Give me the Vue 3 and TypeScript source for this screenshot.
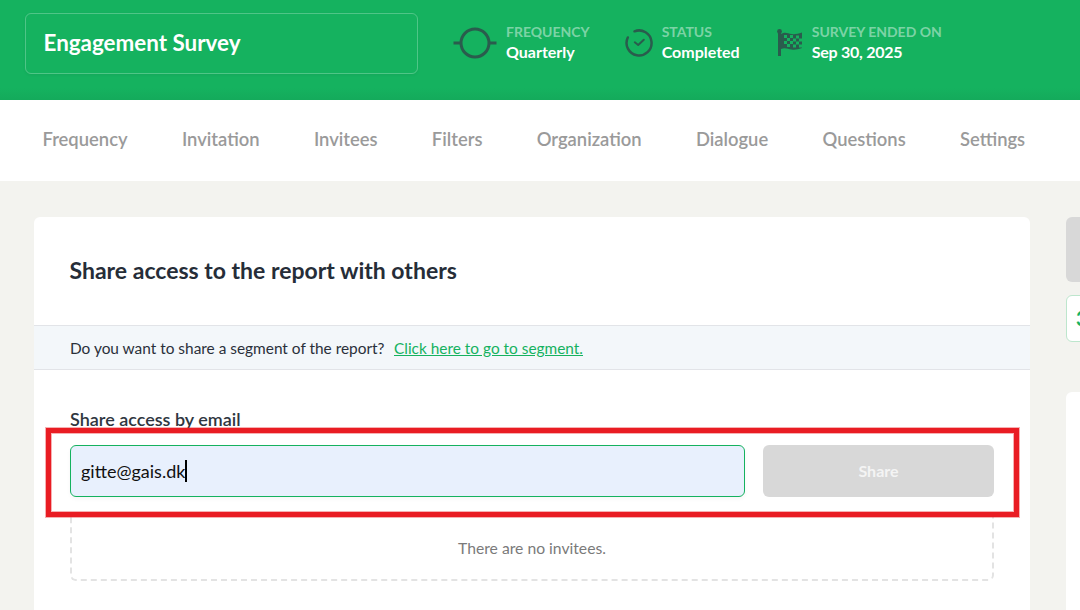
<script setup lang="ts">
const tabs: string[] = ['Frequency', 'Invitation', 'Invitees', 'Filters', 'Organization', 'Dialogue', 'Questions', 'Settings']
const checks: { x: number; y: number }[] = []
for (let r = 0; r < 4; r++) {
  for (let c = 0; c < 6; c++) {
    if ((r + c) % 2 === 0) checks.push({ x: 8 + c * 3, y: 6 + r * 3 + (c > 2 ? 0.5 : 0) })
  }
}
</script>

<template>
  <div class="page">
    <header class="top">
      <div class="title-box">Engagement Survey</div>
      <div class="meta meta-freq">
        <svg class="ic" width="44" height="32" viewBox="0 0 44 32" fill="none" stroke="#2a5c4d" stroke-width="3">
          <circle cx="22" cy="16" r="14" />
          <path d="M0.500 16H8M36 16h7.500" />
        </svg>
        <div class="meta-text"><span class="lbl">FREQUENCY</span><span class="val">Quarterly</span></div>
      </div>
      <div class="meta meta-status">
        <svg class="ic" width="28" height="28" viewBox="0 0 28 28" fill="none" stroke="#2a5c4d" stroke-width="2.500" stroke-linecap="round" stroke-linejoin="round">
          <path d="M9.500 2.300A12.500 12.500 0 1 1 2.800 8.500" />
          <path d="M9.800 13.300l3.400 2.700 5.600-5.300" stroke-width="2" />
        </svg>
        <div class="meta-text"><span class="lbl">STATUS</span><span class="val">Completed</span></div>
      </div>
      <div class="meta meta-end">
        <svg class="ic" width="28" height="28" viewBox="0 0 28 28">
          <circle cx="3.500" cy="2.500" r="2.400" fill="#2a5c4d" />
          <rect x="2" y="3" width="3" height="24" fill="#2a5c4d" />
          <path d="M5 5c4-2.500 7-.5 10.500 0s6 0 10.500-1.500v15.500c-4.500 1.500-7 2-10.500 1.500s-6.500-2.500-10.500-.5z" fill="#2a5c4d" />
          <rect v-for="(k, i) in checks" :key="i" :x="k.x" :y="k.y" width="3" height="3" fill="#15b25f" />
        </svg>
        <div class="meta-text"><span class="lbl">SURVEY ENDED ON</span><span class="val val-date">Sep 30, 2025</span></div>
      </div>
    </header>

    <nav class="tabs">
      <span v-for="t in tabs" :key="t" class="tab">{{ t }}</span>
    </nav>

    <main class="body">
      <section class="card">
        <h1 class="card-title">Share access to the report with others</h1>
        <div class="notice">
          <span>Do you want to share a segment of the report?</span>
          <a class="link">Click here to go to segment.</a>
        </div>
        <div class="form">
          <div class="form-label">Share access by email</div>
          <div class="row">
            <div class="input">gitte@gais.dk<i class="caret"></i></div>
            <button class="share" type="button">Share</button>
          </div>
          <div class="empty">There are no invitees.</div>
        </div>
      </section>
      <aside class="side">
        <div class="side-gray"></div>
        <div class="side-outline">3</div>
        <div class="side-card"></div>
      </aside>
    </main>

    <div class="highlight"></div>
  </div>
</template>

<style>
html, body { margin: 0; overflow: hidden; background: #f3f3ef; }
</style>

<style scoped>
.page {
  position: relative;
  width: 1080px;
  height: 610px;
  overflow: hidden;
  background: #f3f3ef;
  font-family: Lato, "Liberation Sans", sans-serif;
}
.top {
  height: 100px;
  box-sizing: border-box;
  background: linear-gradient(#15b25f 0 88%, #14aa5b 100%);
  padding: 13px 0 0 25px;
  display: flex;
  align-items: flex-start;
}
.title-box {
  width: 393px;
  height: 61px;
  box-sizing: border-box;
  border: 1px solid rgba(255, 255, 255, 0.25);
  border-radius: 6px;
  box-shadow: 0 1px 3px rgba(0, 0, 0, 0.06);
  padding-left: 17.500px;
  line-height: 58px;
  font-size: 22.400px;
  font-weight: 700;
  color: #fff;
}
.meta { display: flex; align-items: center; margin-top: 10px; height: 40px; }
.meta-freq { margin-left: 35px; gap: 9px; }
.meta-status { margin-left: 35px; gap: 9px; }
.meta-end { margin-left: 36px; gap: 8px; }
.ic { flex: none; display: block; }
.meta-text { display: flex; flex-direction: column; padding-bottom: 2px; }
.lbl {
  font-size: 14px;
  line-height: 20px;
  font-weight: 700;
  color: rgba(255, 255, 255, 0.45);
}
.val {
  font-size: 16px;
  line-height: 20px;
  font-weight: 700;
  color: #fff;
}
.val-date { letter-spacing: -0.250px; }
.tabs {
  height: 81px;
  background: #fff;
  box-sizing: border-box;
  padding: 0 0 3px 42.500px;
  display: flex;
  align-items: center;
  gap: 54.300px;
}
.tab {
  font-size: 18.400px;
  font-weight: 600;
  color: #9a9a9a;
}
.body {
  display: flex;
  align-items: flex-start;
  padding: 36px 0 0 34px;
  gap: 36px;
}
.card {
  width: 996px;
  flex: none;
  height: 420px;
  background: #fff;
  border-radius: 6px 6px 0 0;
}
.card-title {
  margin: 0;
  height: 108px;
  box-sizing: border-box;
  padding: 0 35.500px;
  line-height: 106px;
  font-size: 23px;
  font-weight: 700;
  color: #262d38;
}
.notice {
  height: 43px;
  background: #f3f7fa;
  border-top: 1px solid #e2e4e8;
  border-bottom: 1px solid #e2e4e8;
  padding: 0 36px;
  display: flex;
  align-items: center;
  gap: 9.500px;
  font-size: 15.420px;
  color: #2a303a;
}
.link { color: #15b25f; text-decoration: underline; }
.form { padding: 38px 36px 0; }
.form-label {
  font-size: 18px;
  line-height: 22px;
  font-weight: 600;
  color: #2f3640;
}
.row {
  display: flex;
  gap: 18px;
  margin-top: 15px;
}
.input {
  flex: 1;
  height: 52px;
  box-sizing: border-box;
  border: 1px solid #15b25f;
  border-radius: 6px;
  background: #e8f0fd;
  padding-left: 10px;
  font-size: 18px;
  color: #111;
  display: flex;
  align-items: center;
  box-shadow: 0 2px 4px rgba(0, 0, 0, 0.04);
}
.caret {
  display: block;
  width: 2px;
  height: 22px;
  background: #000;
}
.share {
  width: 231px;
  height: 52px;
  flex: none;
  border: 0;
  border-radius: 6px;
  background: #d8d8d8;
  color: #f4f4f4;
  font-family: inherit;
  font-size: 16px;
  font-weight: 700;
  padding: 0 0 2px;
}
.empty {
  height: 68px;
  margin-top: 16px;
  box-sizing: border-box;
  border: 2px dashed #e3e3e3;
  border-top: 0;
  border-radius: 0 0 6px 6px;
  padding-top: 25px;
  text-align: center;
  font-size: 15.700px;
  line-height: 20px;
  color: #7a7a7a;
}
.side { flex: none; width: 60px; display: flex; flex-direction: column; }
.side-gray {
  height: 65px;
  background: #d8d8d8;
  border-radius: 6px;
}
.side-outline {
  margin-top: 13px;
  height: 47px;
  box-sizing: border-box;
  background: #fff;
  border: 1px solid #bde6cd;
  border-radius: 6px;
  padding-left: 9px;
  line-height: 45px;
  font-size: 20px;
  font-weight: 700;
  color: #15b25f;
}
.side-card {
  margin-top: 50px;
  height: 300px;
  background: #fff;
  border-radius: 6px;
}
.highlight {
  position: absolute;
  left: 46px;
  top: 428px;
  width: 973px;
  height: 89px;
  box-sizing: border-box;
  border: 5px solid #e91c23;
  box-shadow: 0 0 0 1px rgba(233, 28, 35, 0.35), inset 0 0 0 1px rgba(233, 28, 35, 0.35);
  pointer-events: none;
}
</style>
